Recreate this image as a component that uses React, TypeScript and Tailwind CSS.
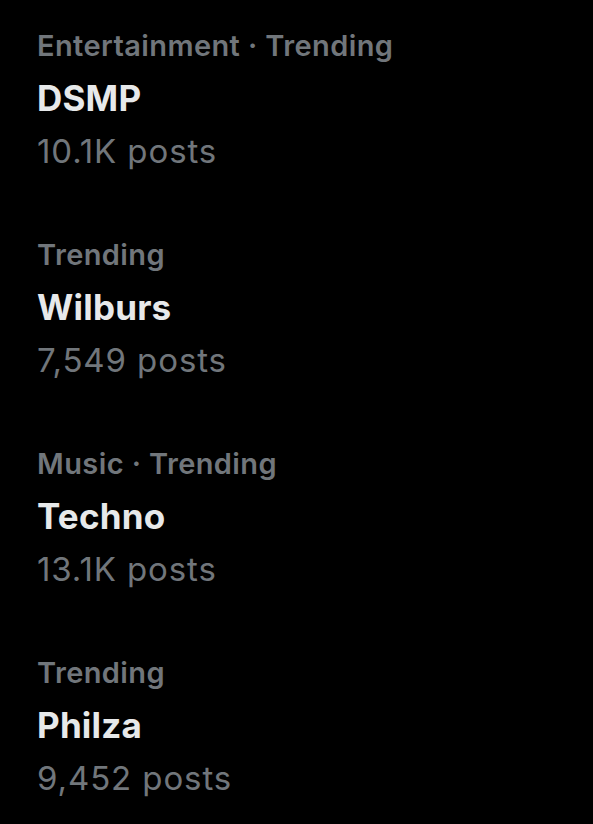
const trends = [
  { category: "Entertainment · Trending", title: "DSMP", posts: "10.1K posts" },
  { category: "Trending", title: "Wilburs", posts: "7,549 posts" },
  { category: "Music · Trending", title: "Techno", posts: "13.1K posts" },
  { category: "Trending", title: "Philza", posts: "9,452 posts" },
];

export default function App() {
  return (
    <div className="min-h-screen w-full bg-black pl-[37px] pt-[19px] font-['Inter',sans-serif]">
      <div className="flex flex-col gap-[50px]">
        {trends.map((t) => (
          <div key={t.title} className="flex flex-col">
            <div className="text-[29px] leading-[53px] font-semibold tracking-[0.4px] text-[#71767b]">{t.category}</div>
            <div className="text-[35px] leading-[53px] font-bold tracking-[0.2px] text-[#e7e9ea]">{t.title}</div>
            <div className="text-[33px] leading-[53px] font-normal tracking-[0.9px] text-[#71767b]">{t.posts}</div>
          </div>
        ))}
      </div>
    </div>
  );
}
